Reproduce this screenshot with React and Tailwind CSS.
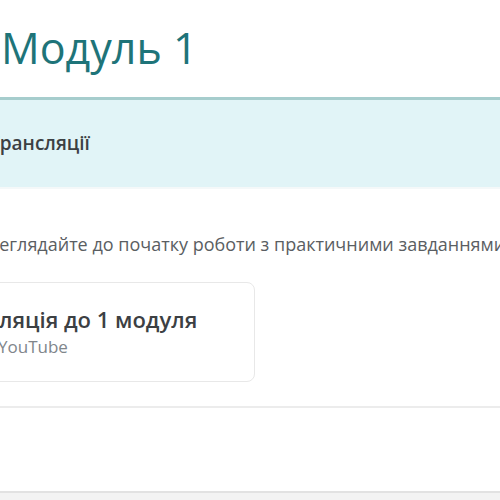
export default function App() {
  return (
    <div className="w-[500px] h-[500px] overflow-hidden bg-white font-['Open_Sans','Roboto',sans-serif]">
      <div className="h-[97px] flex items-end pb-[28px] pl-[1px]">
        <h1 className="text-[43px] leading-none text-[#1e7479] font-normal">Модуль 1</h1>
      </div>
      <div className="h-[3px] bg-[#a6cdcd]"></div>
      <div className="h-[87px] bg-[#e1f4f7] flex items-center">
        <p className="-ml-[11px] text-[19px] text-[#3c4043] font-semibold">Трансляції</p>
      </div>
      <div className="h-[2px] bg-[#f4f8f9]"></div>
      <div className="pt-[43px]">
        <p className="-ml-[35px] whitespace-nowrap text-[18px] text-[#5a5e62] leading-[24px]">
          Переглядайте до початку роботи з практичними завданнями
        </p>
      </div>
      <div className="pt-[26px] pr-[245px]">
        <div className="-ml-[10px] h-[100px] rounded-lg border border-[#e8e8e8] bg-white flex flex-col justify-center pl-[8px] overflow-hidden">
          <p className="-ml-[64px] whitespace-nowrap text-[22px] font-semibold text-[#3c4043] leading-[26px]">Трансляція до 1 модуля</p>
          <p className="mt-[4px] -ml-[1px] text-[17px] text-[#80868b] leading-[22px]">YouTube</p>
        </div>
      </div>
      <div className="mt-[24px] h-[2px] bg-[#ececec]"></div>
      <div className="h-[83px] bg-white"></div>
      <div className="h-[2px] bg-[#e2e2e2]"></div>
      <div className="h-[9px] bg-[#f3f3f3]"></div>
    </div>
  );
}
